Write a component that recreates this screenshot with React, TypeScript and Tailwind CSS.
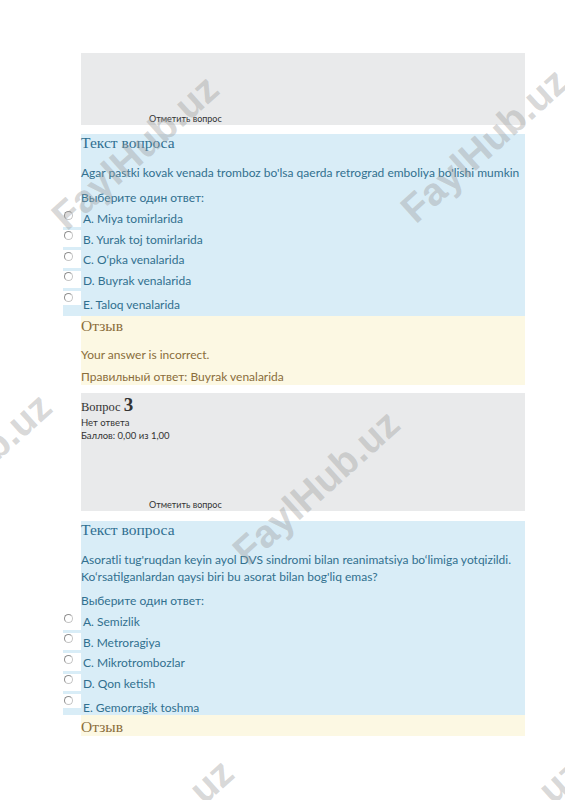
// Moodle quiz review page (printed PDF look) with FaylHub watermark
function Radio() {
  return (
    <span className="mt-[1.5px] ml-[0.5px] block h-[9px] w-[9px] rounded-full border border-[#8f8f8f] border-b-[#c4c4c4] border-r-[#c4c4c4] bg-white" />
  );
}

function Option({ text, last, compact }: { text: string; last?: boolean; compact?: boolean }) {
  const rowH = last ? (compact ? "h-[21px]" : "h-[25px]") : "h-[20.5px]";
  return (
    <div className={`-ml-[18px] flex bg-[#d9edf7] ${rowH}`}>
      <div className={`w-[18px] shrink-0 bg-white ${last ? "h-[14px]" : "h-[17.5px]"}`}>
        <Radio />
      </div>
      <div className={`pl-[2px] leading-[20.5px] ${last ? "pt-[4px]" : ""}`}>{text}</div>
    </div>
  );
}

function QuestionBlock({ lines, options, compact }: { lines: string[]; options: string[]; compact?: boolean }) {
  return (
    <div className="bg-[#d9edf7] text-[#31708f]">
      <div className="font-['Liberation_Serif',serif] text-[15.5px] leading-[18px] text-[#2f6f91]">Текст вопроса</div>
      <div className="mt-[12px] whitespace-nowrap text-[12px] leading-[17px]">
        {lines.map((l) => (
          <div key={l}>{l}</div>
        ))}
      </div>
      <div className={`${compact ? "mt-[8px]" : "mt-[9px]"} text-[12px] leading-[16px]`}>Выберите один ответ:</div>
      <div className="mt-[3px] text-[12px]">
        {options.map((o, i) => (
          <Option key={o} text={o} last={i === options.length - 1} compact={compact} />
        ))}
      </div>
    </div>
  );
}

function Watermark({ pos }: { pos: string }) {
  return (
    <div
      className={`absolute ${pos} -translate-x-1/2 -translate-y-1/2 -rotate-[42deg] whitespace-nowrap font-['Liberation_Sans',sans-serif] text-[39px] font-bold leading-none text-[#9a9a9a]/40`}
    >
      FaylHub.uz
    </div>
  );
}

export default function App() {
  return (
    <div className="relative h-[800px] w-[565px] overflow-hidden bg-white font-['Lato',sans-serif]">
      <div className="ml-[81px] w-[444px] pt-[53px]">
        {/* flag bar of previous question */}
        <div className="flex h-[72px] flex-col justify-end bg-[#e9eaeb] pl-[68px]">
          <div className="text-[9px] leading-[12px] text-[#333]">Отметить вопрос</div>
        </div>

        <div className="mt-[9px]">
          <QuestionBlock
            lines={["Agar pastki kovak venada tromboz bo'lsa qaerda retrograd emboliya bo'lishi mumkin"]}
            options={[
              "A. Miya tomirlarida",
              "B. Yurak toj tomirlarida",
              "C. O‘pka venalarida",
              "D. Buyrak venalarida",
              "E. Taloq venalarida",
            ]}
          />
        </div>

        <div className="h-[69px] bg-[#fcf8e3] text-[#8a6d3b]">
          <div className="pt-[1px] font-['Liberation_Serif',serif] text-[15.5px] leading-[18px]">Отзыв</div>
          <div className="mt-[12px] text-[12px] leading-[16px]">Your answer is incorrect.</div>
          <div className="mt-[6px] text-[12px] leading-[16px]">Правильный ответ: Buyrak venalarida</div>
        </div>

        {/* question 3 info */}
        <div className="mt-[8px] flex h-[118px] flex-col bg-[#e9eaeb] text-[#333]">
          <div className="pt-[3px] font-['Liberation_Serif',serif] text-[12.5px] leading-[18px]">
            Вопрос <span className="text-[19px] font-bold">3</span>
          </div>
          <div className="text-[9.5px] leading-[13px]">Нет ответа</div>
          <div className="text-[9.5px] leading-[13px]">Баллов: 0,00 из 1,00</div>
          <div className="mt-auto pl-[68px] text-[9px] leading-[12px]">Отметить вопрос</div>
        </div>

        <div className="mt-[10px]">
          <QuestionBlock
            compact
            lines={[
              "Asoratli tug'ruqdan keyin ayol DVS sindromi bilan reanimatsiya bo‘limiga yotqizildi.",
              "Ko‘rsatilganlardan qaysi biri bu asorat bilan bog'liq emas?",
            ]}
            options={[
              "A. Semizlik",
              "B. Metroragiya",
              "C. Mikrotrombozlar",
              "D. Qon ketish",
              "E. Gemorragik toshma",
            ]}
          />
        </div>

        <div className="h-[21px] bg-[#fcf8e3] text-[#8a6d3b]">
          <div className="pt-[3px] font-['Liberation_Serif',serif] text-[15.5px] leading-[18px]">Отзыв</div>
        </div>
      </div>

      <div className="pointer-events-none absolute inset-0">
        <Watermark pos="left-[135px] top-[152px]" />
        <Watermark pos="left-[484px] top-[145px]" />
        <Watermark pos="left-[-32px] top-[470px]" />
        <Watermark pos="left-[316px] top-[487px]" />
        <Watermark pos="left-[150px] top-[836px]" />
        <Watermark pos="left-[499px] top-[836px]" />
      </div>
    </div>
  );
}
